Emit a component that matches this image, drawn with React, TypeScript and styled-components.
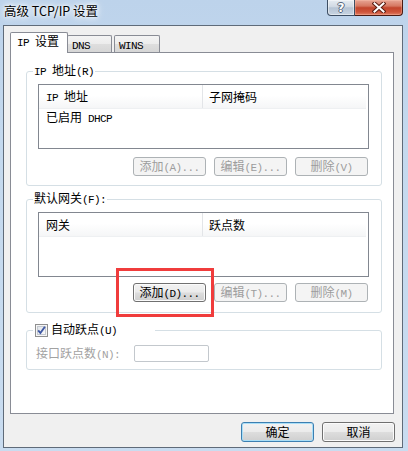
import React from "react";
import styled, { createGlobalStyle, css } from "styled-components";

const Global = createGlobalStyle`
  html, body { margin: 0; padding: 0; }
  body {
    font-family: "Noto Sans CJK SC", "Noto Sans", sans-serif;
    font-size: 12px;
    color: #000;
  }
  * { box-sizing: border-box; }
`;

const Half = styled.span`
  font-family: "Liberation Mono", monospace;
  font-size: 11px;
  letter-spacing: -0.6px;
`;

const MixedText = styled.span`
  white-space: pre;
`;

function Mixed({ text }: { text: string }) {
  const parts = text.split(/([\x00-\x7f]+)/).filter((p) => p !== "");
  return (
    <MixedText>
      {parts.map((p, i) =>
        /^[\x00-\x7f]+$/.test(p) ? <Half key={i}>{p}</Half> : <span key={i}>{p}</span>
      )}
    </MixedText>
  );
}

const Window = styled.div`
  position: relative;
  width: 408px;
  height: 451px;
  padding: 0 5px 3px 3px;
  background: linear-gradient(180deg, #bdd3eb 0%, #c4d9ee 30%, #c9dcf0 100%);
  display: flex;
  flex-direction: column;
  overflow: hidden;
`;

const TitleBar = styled.div`
  height: 25px;
  display: flex;
  justify-content: space-between;
  align-items: flex-start;
`;

const Title = styled.div`
  margin-top: 3px;
  padding-left: 1px;
  line-height: 16px;
  font-size: 12.5px;
  color: #000;
  text-shadow: 0 0 6px #fff, 0 0 10px #fff, 0 0 3px #fff;
`;

const Captions = styled.div`
  display: flex;
`;

const HelpBtn = styled.div`
  width: 28px;
  height: 16px;
  border: 1px solid #3d4e63;
  border-top: none;
  border-radius: 0 0 0 4px;
  background: linear-gradient(180deg, #e6ecf2 0%, #d0d9e3 45%, #b6c4d4 52%, #c7d4e2 100%);
  box-shadow: inset 0 0 0 1px rgba(255, 255, 255, 0.45);
  display: flex;
  align-items: center;
  justify-content: center;
  font-family: "DejaVu Sans", sans-serif;
  font-weight: bold;
  font-size: 12px;
  line-height: 14px;
  color: #fff;
  text-shadow: -1px 0 #56657a, 1px 0 #56657a, 0 -1px #56657a, 0 1px #56657a;
`;

const CloseBtn = styled.div`
  width: 48px;
  height: 16px;
  border: 1px solid #4a1a12;
  border-left: none;
  border-top: none;
  border-radius: 0 0 4px 0;
  background: linear-gradient(180deg, #e7a595 0%, #d67862 40%, #c2452c 52%, #cf553b 80%, #e08066 100%);
  box-shadow: inset 0 0 0 1px rgba(255, 200, 180, 0.35);
  display: flex;
  align-items: center;
  justify-content: center;
`;

const Client = styled.div`
  height: 423px;
  flex: none;
  border: 1px solid #5f6b79;
  background: #f0f0f0;
  display: flex;
  flex-direction: column;
`;

const TabStrip = styled.div`
  height: 26px;
  padding-left: 6px;
  display: flex;
  align-items: flex-end;
`;

const Tab = styled.div<{ $active?: boolean; $w: number; $ml?: number }>`
  width: ${(p) => p.$w}px;
  margin-left: ${(p) => p.$ml ?? 0}px;
  border: 1px solid #898c95;
  border-bottom: none;
  border-radius: 2px 2px 0 0;
  display: flex;
  align-items: center;
  line-height: 14px;
  ${(p) =>
    p.$active
      ? css`
          height: 21px;
          margin-bottom: -1px;
          position: relative;
          z-index: 1;
          background: #fff;
          padding-left: 6px;
          padding-bottom: 2px;
        `
      : css`
          height: 17px;
          background: linear-gradient(180deg, #f4f4f4 0%, #ececec 50%, #dedede 52%, #d6d6d6 100%);
          padding-left: 4px;
          padding-top: 1px;
        `}
`;

const Panel = styled.div`
  margin-left: 6px;
  width: 384px;
  height: 362px;
  flex: none;
  border: 1px solid #898c95;
  background: #fff;
  padding-left: 15px;
  display: flex;
  flex-direction: column;
`;

const Group = styled.div<{ $mt: number; $pad: string }>`
  position: relative;
  flex: none;
  margin-top: ${(p) => p.$mt}px;
  width: 356px;
  border: 1px solid #d5dfe5;
  border-radius: 3px;
  padding: ${(p) => p.$pad};
`;

const Legend = styled.div<{ $w?: number; $pl?: number }>`
  position: absolute;
  left: 6px;
  top: -8px;
  ${(p) => (p.$w ? `width: ${p.$w}px;` : "")}
  height: 14px;
  line-height: 14px;
  padding: 0 1px 0 ${(p) => p.$pl ?? 1}px;
  background: #fff;
  display: flex;
  align-items: center;
  gap: 3px;
`;

const ListView = styled.div`
  height: 65px;
  border: 1px solid #828790;
  background: #fff;
  display: flex;
  flex-direction: column;
`;

const HeaderRow = styled.div`
  height: 24px;
  flex: none;
  display: flex;
  margin-right: 2px;
  background: linear-gradient(180deg, #ffffff 0%, #ffffff 45%, #f5f6f7 100%);
  border-bottom: 1px solid #eef0f2;
`;

const HeaderCell = styled.div<{ $w?: number; $pl: number }>`
  ${(p) => (p.$w ? `width: ${p.$w}px; border-right: 1px solid #e3e5e8;` : "flex: 1;")}
  padding-left: ${(p) => p.$pl}px;
  display: flex;
  align-items: center;
  line-height: 14px;
`;

const Row = styled.div`
  height: 18px;
  padding-left: 7px;
  display: flex;
  align-items: center;
  line-height: 14px;
`;

const ButtonRow = styled.div<{ $mt: number }>`
  margin-top: ${(p) => p.$mt}px;
  display: flex;
  justify-content: flex-end;
  gap: 8px;
  padding-right: 1px;
`;

const Btn = styled.button<{ $off?: boolean; $def?: boolean; $h: number }>`
  width: 73px;
  height: ${(p) => p.$h}px;
  margin: 0;
  padding: 0;
  font: inherit;
  line-height: 14px;
  border-radius: 3px;
  display: flex;
  align-items: center;
  justify-content: center;
  border: 1px solid #707070;
  color: #000;
  background: linear-gradient(180deg, #f2f2f2 0%, #ebebeb 48%, #dddddd 52%, #cfcfcf 100%);
  box-shadow: inset 0 0 0 1px #fbfbfb;
  ${(p) =>
    p.$off &&
    css`
      border-color: #adb2b5;
      background: #f4f4f4;
      color: #9d9d9d;
      box-shadow: none;
    `}
  ${(p) =>
    p.$def &&
    css`
      border-color: #3c7fb1;
      box-shadow: inset 0 0 0 1px #a9def7;
    `}
`;

const HopRow = styled.div`
  display: flex;
  align-items: center;
  padding-left: 9px;
`;

const DimLabel = styled.div`
  width: 98px;
  color: #a2a2a2;
  line-height: 14px;
`;

const DimInput = styled.div`
  width: 75px;
  height: 17px;
  border: 1px solid #c3c8cd;
  border-radius: 2px;
  background: #fff;
`;

const Footer = styled.div`
  margin-top: 8px;
  display: flex;
  justify-content: flex-end;
  gap: 8px;
  padding-right: 7px;
`;

const Highlight = styled.div`
  position: absolute;
  left: 116px;
  top: 268px;
  width: 98px;
  height: 49px;
  border: 3px solid #f03c3c;
  pointer-events: none;
`;

function CheckBox() {
  return (
    <svg width="13" height="13" viewBox="0 0 13 13">
      <defs>
        <linearGradient id="cbg" x1="0" y1="0" x2="1" y2="1">
          <stop offset="0" stopColor="#dfe3e8" />
          <stop offset="1" stopColor="#fbfbfb" />
        </linearGradient>
      </defs>
      <rect x="0.5" y="0.5" width="12" height="12" fill="#f6f6f6" stroke="#8f8f8f" />
      <rect x="2.5" y="2.5" width="8" height="8" fill="url(#cbg)" stroke="#c4c9d0" />
      <path d="M3.2 6.4 L5.4 9 L9.9 2.8" stroke="#3f58a4" strokeWidth="1.9" fill="none" />
    </svg>
  );
}

function CloseGlyph() {
  return (
    <svg width="14" height="11" viewBox="0 0 14 11">
      <path d="M2.5 1.5 L11.5 9.5 M11.5 1.5 L2.5 9.5" stroke="#5a1d12" strokeWidth="4" strokeLinecap="square" />
      <path d="M2.5 1.5 L11.5 9.5 M11.5 1.5 L2.5 9.5" stroke="#ffffff" strokeWidth="2" strokeLinecap="square" />
    </svg>
  );
}

export default function App() {
  return (
    <>
      <Global />
      <Window>
        <TitleBar>
          <Title>高级 TCP/IP 设置</Title>
          <Captions>
            <HelpBtn>?</HelpBtn>
            <CloseBtn>
              <CloseGlyph />
            </CloseBtn>
          </Captions>
        </TitleBar>
        <Client>
          <TabStrip>
            <Tab $active $w={58}>
              <Mixed text="IP 设置" />
            </Tab>
            <Tab $w={45} $ml={-1}>
              <Mixed text="DNS" />
            </Tab>
            <Tab $w={46} $ml={2}>
              <Mixed text="WINS" />
            </Tab>
          </TabStrip>
          <Panel>
            <Group $mt={18} $pad="12px 12px 9px 11px">
              <Legend>
                <Mixed text="IP 地址(R)" />
              </Legend>
              <ListView>
                <HeaderRow>
                  <HeaderCell $w={164} $pl={7}>
                    <Mixed text="IP 地址" />
                  </HeaderCell>
                  <HeaderCell $pl={6}>子网掩码</HeaderCell>
                </HeaderRow>
                <Row>
                  <Mixed text="已启用 DHCP" />
                </Row>
              </ListView>
              <ButtonRow $mt={8}>
                <Btn $off $h={19}>
                  <Mixed text="添加(A)..." />
                </Btn>
                <Btn $off $h={19}>
                  <Mixed text="编辑(E)..." />
                </Btn>
                <Btn $off $h={19}>
                  <Mixed text="删除(V)" />
                </Btn>
              </ButtonRow>
            </Group>

            <Group $mt={13} $pad="12px 12px 10px 11px">
              <Legend>
                <Mixed text="默认网关(F):" />
              </Legend>
              <ListView>
                <HeaderRow>
                  <HeaderCell $w={164} $pl={7}>
                    网关
                  </HeaderCell>
                  <HeaderCell $pl={6}>跃点数</HeaderCell>
                </HeaderRow>
              </ListView>
              <ButtonRow $mt={6}>
                <Btn $h={19}>
                  <Mixed text="添加(D)..." />
                </Btn>
                <Btn $off $h={19}>
                  <Mixed text="编辑(T)..." />
                </Btn>
                <Btn $off $h={19}>
                  <Mixed text="删除(M)" />
                </Btn>
              </ButtonRow>
            </Group>

            <Group $mt={17} $pad="14px 12px 7px 0">
              <Legend $w={122} $pl={2}>
                <CheckBox />
                <Mixed text="自动跃点(U)" />
              </Legend>
              <HopRow>
                <DimLabel>
                  <Mixed text="接口跃点数(N):" />
                </DimLabel>
                <DimInput />
              </HopRow>
            </Group>
          </Panel>
          <Footer>
            <Btn $def $h={20}>确定</Btn>
            <Btn $h={20}>取消</Btn>
          </Footer>
        </Client>
        <Highlight />
      </Window>
    </>
  );
}
